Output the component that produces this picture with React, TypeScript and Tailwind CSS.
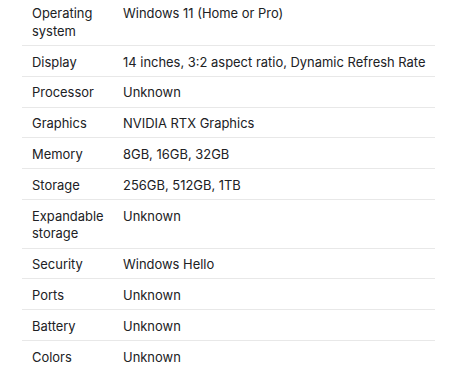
export default function App() {
  const rows: [string, string][] = [
    ["Operating system", "Windows 11 (Home or Pro)"],
    ["Display", "14 inches, 3:2 aspect ratio, Dynamic Refresh Rate"],
    ["Processor", "Unknown"],
    ["Graphics", "NVIDIA RTX Graphics"],
    ["Memory", "8GB, 16GB, 32GB"],
    ["Storage", "256GB, 512GB, 1TB"],
    ["Expandable storage", "Unknown"],
    ["Security", "Windows Hello"],
    ["Ports", "Unknown"],
    ["Battery", "Unknown"],
    ["Colors", "Unknown"],
  ];
  return (
    <div className="w-[460px] h-[387px] bg-white overflow-hidden" style={{ fontFamily: "Inter, 'Noto Sans', sans-serif" }}>
      <div className="ml-[22px] w-[413px] mt-[-2.5px]">
        {rows.map(([k, v], i) => (
          <div
            key={k}
            className={`flex text-[12.95px] leading-[17.8px] text-[#202124] pt-[7.5px] pb-[4.5px] ${i < rows.length - 1 ? "border-b border-[#e8e8e8]" : ""}`}
          >
            <div className="w-[101px] pl-[10px] pr-[8px] shrink-0">{k}</div>
            <div className="flex-1">{v}</div>
          </div>
        ))}
      </div>
    </div>
  );
}
